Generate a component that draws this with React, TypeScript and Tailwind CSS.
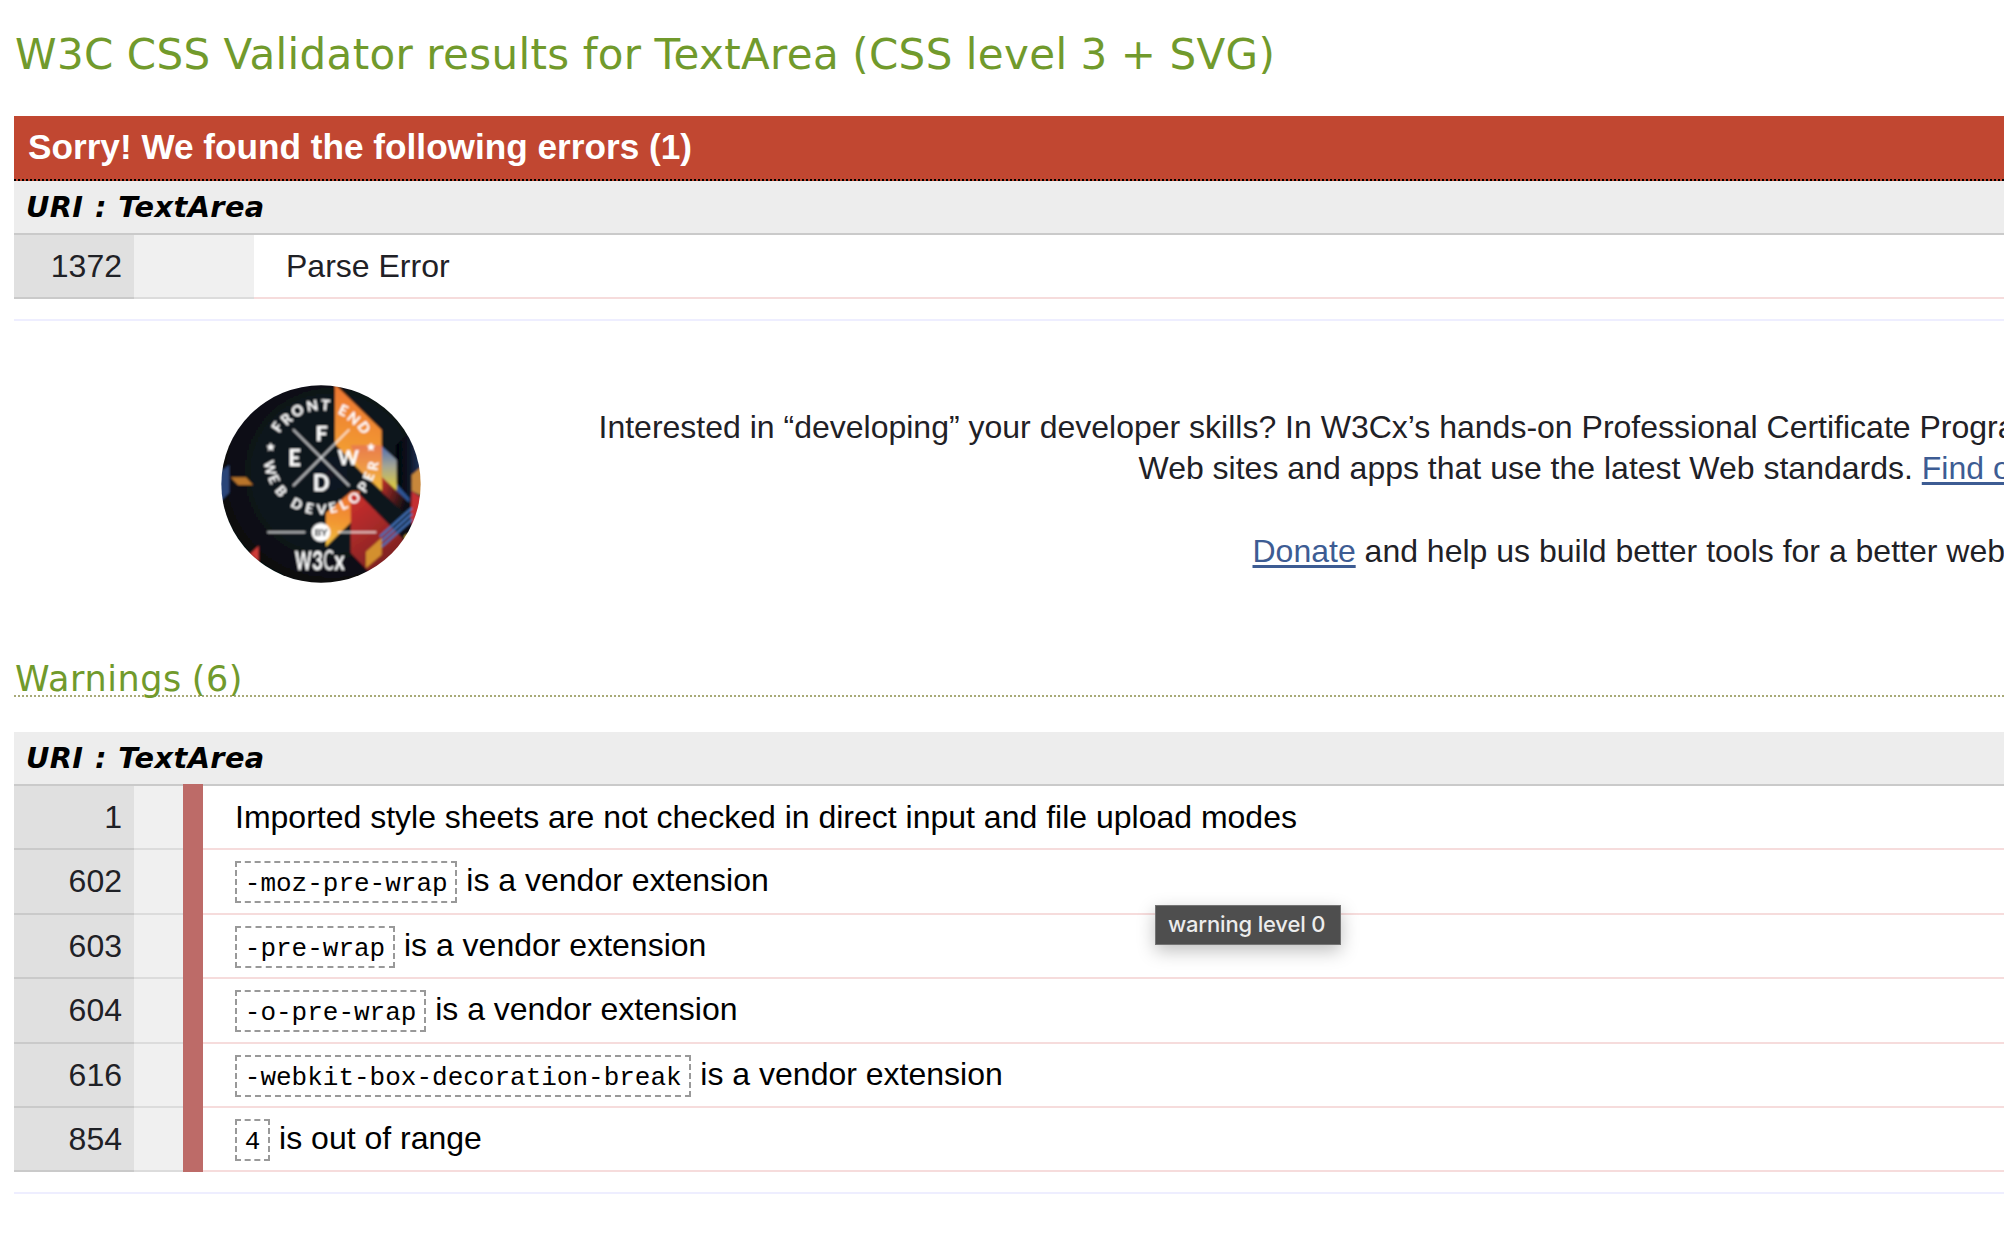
import React from 'react';

type Warning = { line: string; code?: string; text: string; height: string; shift: string };

const warnings: Warning[] = [
  { line: '1', text: 'Imported style sheets are not checked in direct input and file upload modes', height: 'h-[64px]', shift: '' },
  { line: '602', code: '-moz-pre-wrap', text: 'is a vendor extension', height: 'h-[65px]', shift: 'pb-[3px]' },
  { line: '603', code: '-pre-wrap', text: 'is a vendor extension', height: 'h-[64px]', shift: 'pb-[2px]' },
  { line: '604', code: '-o-pre-wrap', text: 'is a vendor extension', height: 'h-[65px]', shift: 'pb-[3px]' },
  { line: '616', code: '-webkit-box-decoration-break', text: 'is a vendor extension', height: 'h-[64px]', shift: 'pb-[2px]' },
  { line: '854', code: '4', text: 'is out of range', height: 'h-[64px]', shift: 'pb-[2px]' },
];

const CX = 363;
const CY = 262;

const topLetters: [string, number, number][] = [
  ['F', 232, 171], ['R', 259, 147], ['O', 292, 122], ['N', 337, 107], ['T', 376, 105],
  ['E', 430, 121], ['N', 461, 145], ['D', 492, 173],
];

const bottomLetters: [string, number, number][] = [
  ['W', 210, 294], ['E', 222, 328], ['B', 243, 363], ['D', 290, 402], ['E', 328, 415], ['V', 365, 418],
  ['E', 398, 413], ['L', 430, 403], ['O', 463, 384], ['P', 490, 351], ['E', 506, 320], ['R', 519, 288],
];

const deg = (r: number) => (r * 180) / Math.PI;

function Star({ x, y }: { x: number; y: number }) {
  return (
    <polygon
      transform={`translate(${x} ${y})`}
      points="0,-13 4,-4.5 13,-4 6,2.5 8,12 0,7 -8,12 -6,2.5 -13,-4 -4,-4.5"
      fill="#fff"
    />
  );
}

function Badge() {
  return (
    <svg viewBox="63 45 600 594" className="h-[198px] w-[200px] shrink-0" fontFamily="Lato, sans-serif">
      <defs>
        <clipPath id="disc"><ellipse cx="363" cy="342" rx="299" ry="296" /></clipPath>
        <radialGradient id="night" cx="0.55" cy="0.45" r="0.6">
          <stop offset="0" stopColor="#121921" />
          <stop offset="0.6" stopColor="#0d141b" />
          <stop offset="1" stopColor="#04070a" />
        </radialGradient>
        <linearGradient id="flame" x1="0.4" y1="0" x2="0.3" y2="1">
          <stop offset="0" stopColor="#ee7430" />
          <stop offset="0.6" stopColor="#f29a33" />
          <stop offset="1" stopColor="#f0c040" />
        </linearGradient>
        <linearGradient id="sky" x1="0" y1="0" x2="0" y2="1">
          <stop offset="0" stopColor="#4f6db0" />
          <stop offset="0.45" stopColor="#a3a595" />
          <stop offset="1" stopColor="#e3cf35" />
        </linearGradient>
        <linearGradient id="salmon" x1="0" y1="0" x2="0" y2="1">
          <stop offset="0" stopColor="#e87b4e" />
          <stop offset="0.5" stopColor="#ef9a45" />
          <stop offset="1" stopColor="#f3bc3a" />
        </linearGradient>
        <linearGradient id="ember" x1="0" y1="0" x2="0.5" y2="1">
          <stop offset="0" stopColor="#cf2f2c" />
          <stop offset="0.5" stopColor="#a82a29" />
          <stop offset="1" stopColor="#7c2222" />
        </linearGradient>
        <linearGradient id="fade" x1="0" y1="0" x2="1" y2="0.5">
          <stop offset="0" stopColor="#c5302b" />
          <stop offset="1" stopColor="#0b0d12" />
        </linearGradient>
        <linearGradient id="navy" x1="0" y1="0" x2="1" y2="0">
          <stop offset="0" stopColor="#020305" />
          <stop offset="0.4" stopColor="#0b1322" />
          <stop offset="1" stopColor="#2a4478" />
        </linearGradient>
        <filter id="soften" x="-5%" y="-5%" width="110%" height="110%">
          <feGaussianBlur stdDeviation="2.4" />
        </filter>
      </defs>
      <g clipPath="url(#disc)">
        <g filter="url(#soften)">
          <rect x="43" y="25" width="640" height="634" fill="url(#night)" />
          <polygon points="588,225 625,190 680,200 680,340 640,400 588,350" fill="url(#navy)" />
          <polygon points="588,340 628,385 628,405 588,365" fill="#2f5596" />
          <polygon points="545,228 590,270 590,362 545,335" fill="url(#sky)" />
          <polygon points="545,320 630,400 630,425 605,422 545,366" fill="url(#fade)" />
          <polygon points="405,43 545,180 545,362 470,292 405,222" fill="url(#flame)" />
          <polygon points="452,226 545,226 545,362 480,302" fill="url(#salmon)" />
          <polygon points="635,315 670,285 670,380 635,362" fill="#c8873a" />
          <polygon points="635,362 670,388 640,470 632,450" fill="#c42f33" />
          <polygon points="378,428 455,364 480,364 452,458 378,530" fill="url(#flame)" />
          <polygon points="452,370 470,365 612,510 590,575 503,602 452,548" fill="url(#ember)" />
          <g stroke="#4271b8" strokeWidth="7">
            <line x1="540" y1="500" x2="636" y2="414" />
            <line x1="540" y1="517" x2="636" y2="431" />
            <line x1="540" y1="534" x2="636" y2="448" />
          </g>
          <polygon points="498,545 545,503 545,554 498,594" fill="#d3902f" />
          <polygon points="612,500 624,490 618,510" fill="#d8b13a" />
          <polygon points="55,310 88,285 88,368 55,400" fill="#2b4478" />
          <polygon points="92,322 138,322 159,345 114,345" fill="#b9742a" />
          <polygon points="150,552 176,527 176,575" fill="#cf3a38" />
          <g stroke="#fff" strokeOpacity="0.72" strokeWidth="6">
            <line x1="279" y1="178" x2="448" y2="348" />
            <line x1="448" y1="178" x2="279" y2="348" />
            <line x1="202" y1="487" x2="316" y2="487" />
            <line x1="414" y1="487" x2="529" y2="487" />
          </g>
          <g fill="#fff" textAnchor="middle" fontWeight="900">
            {topLetters.map(([c, x, y], i) => (
              <text key={i} fontSize="44" transform={`translate(${x} ${y}) rotate(${deg(Math.atan2(x - CX, CY - y))})`} y="16">{c}</text>
            ))}
            {bottomLetters.map(([c, x, y], i) => (
              <text key={i} fontSize="42" transform={`translate(${x} ${y}) rotate(${deg(Math.atan2(CX - x, y - CY))})`} y="15">{c}</text>
            ))}
            <text x="365" y="214" fontSize="65">F</text>
            <text x="284" y="287" fontSize="66">E</text>
            <text x="445" y="285" fontSize="60">W</text>
            <text x="363" y="363" fontSize="66">D</text>
            <circle cx="363" cy="487" r="28" />
          </g>
          <text x="363" y="498" fontSize="30" fontWeight="900" textAnchor="middle" fill="#0d141b">BY</text>
          <Star x={212} y={231} />
          <Star x={513} y={231} />
          <g fill="#fff" fontSize="79">
            <text x="285" y="600" fontWeight="700" textLength="50" lengthAdjust="spacingAndGlyphs">W</text>
            <text x="336" y="600" fontWeight="700" textLength="33" lengthAdjust="spacingAndGlyphs">3</text>
            <text x="370" y="600" fontWeight="400" textLength="32" lengthAdjust="spacingAndGlyphs">C</text>
            <text x="403" y="600" fontWeight="700" textLength="31" lengthAdjust="spacingAndGlyphs">x</text>
          </g>
        </g>
      </g>
    </svg>
  );
}

function UriHeading() {
  return (
    <h4 className="h-[54px] border-b-2 border-[#cacaca] bg-[#ededed] pl-[12px] font-['DejaVu_Sans',Verdana,sans-serif] text-[28.8px] leading-[52px] font-bold tracking-[0.4px] text-black italic [word-spacing:1px]">
      URI : TextArea
    </h4>
  );
}

const link = 'text-[#3d5c93] underline decoration-[3px] underline-offset-[3px]';

export default function App() {
  return (
    <div className="relative h-[1240px] w-[2004px] overflow-hidden bg-white pl-[14px] font-['Liberation_Sans',Arial,sans-serif] text-[32px] text-[#1f2126]">
      <h2 className="h-[116px] pl-[1px] font-['DejaVu_Sans',Verdana,sans-serif] text-[42px] leading-[109px] tracking-[0.36px] whitespace-nowrap text-[#719a2c] [word-spacing:-0.6px]">
        W3C CSS Validator results for TextArea (CSS level 3 + SVG)
      </h2>

      <h3 className="h-[65px] border-b-2 border-dotted border-black bg-[#c14731] pl-[14px] text-[35.2px] leading-[62px] font-bold text-white">
        Sorry! We found the following errors (1)
      </h3>
      <UriHeading />
      <div className="flex h-[64px] leading-[62px]">
        <div className="w-[120px] border-b-2 border-[#cacaca] bg-[#e0e0e0] pr-[12px] text-right">1372</div>
        <div className="w-[120px] border-b-2 border-[#dcdcdc] bg-[#f0f0f0]" />
        <div className="flex-1 border-b-2 border-[#f6dcdc] pl-[32px]">Parse Error</div>
      </div>
      <div className="mt-[20px] h-[2px] bg-[#eeeeff]" />

      <div className="flex h-[342px] pt-[64px] pl-[207px]">
        <Badge />
        <div className="flex-1 overflow-hidden pt-[22px] leading-[41.4px] whitespace-nowrap">
          <p className="pl-[177.5px]">
            Interested in “developing” your developer skills? In W3Cx’s hands-on Professional Certificate Program
          </p>
          <p className="mb-[41.4px] pl-[717.5px]">
            Web sites and apps that use the latest Web standards. <span className={link}>Find out</span>
          </p>
          <p className="pl-[831.5px]">
            <span className={link}>Donate</span> and help us build better tools for a better web.
          </p>
        </div>
      </div>

      <h3 className="h-[34px] border-b-2 border-dotted border-[#a8aa78] pl-[1px] font-['DejaVu_Sans',Verdana,sans-serif] text-[35px] leading-[32px] tracking-[0.6px] text-[#719a2c] [word-spacing:-2px]">
        Warnings (6)
      </h3>
      <div className="mt-[35px]">
        <UriHeading />
        {warnings.map((w, i) => (
          <div key={w.line} className={`flex items-stretch ${w.height}`}>
            <div className="flex w-[120px] items-start justify-end border-b-2 border-[#cacaca] bg-[#e0e0e0] pr-[12px] leading-[62px]">{w.line}</div>
            <div className="w-[49px] border-b-2 border-[#dcdcdc] bg-[#f0f0f0]" />
            <div className={`w-[20px] bg-[#bd6b68] ${i === 0 ? '-mt-[2px]' : ''}`} />
            <div className={`flex flex-1 items-center border-b-2 border-[#f6dcdc] pl-[32px] text-black ${w.shift}`}>
              <p className="whitespace-nowrap">
                {w.code && (
                  <>
                    <code className="border-2 border-dashed border-[#999] px-[7.8px] pt-[6px] pb-[2px] font-['Liberation_Mono','Courier_New',monospace] text-[26px]">{w.code}</code>{' '}
                  </>
                )}
                {w.text}
              </p>
            </div>
          </div>
        ))}
      </div>
      <div className="mt-[20px] h-[2px] bg-[#eeeeff]" />

      <div className="absolute top-[905px] left-[1155px] h-[40px] w-[186px] border border-[#747474] bg-[#4e4e4e] pl-[12px] font-['Inter',sans-serif] text-[22px] leading-[37px] font-medium tracking-[-0.17px] whitespace-nowrap text-[#ececec] shadow-[0_6px_18px_rgba(0,0,0,0.25)]">
        warning level 0
      </div>
    </div>
  );
}
